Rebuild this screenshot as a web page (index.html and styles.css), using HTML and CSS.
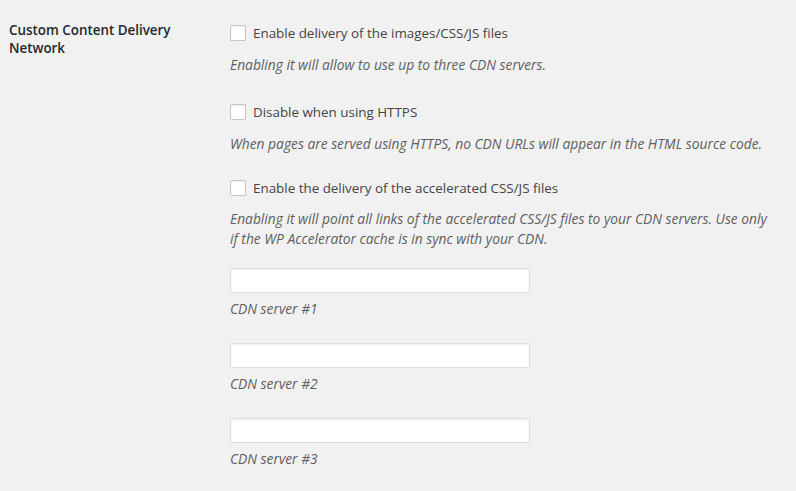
FILE: index.html
```html
<!DOCTYPE html>
<html lang="en">
<head>
<meta charset="utf-8">
<title>CDN settings</title>
<link rel="stylesheet" href="styles.css">
</head>
<body>
<div class="form-row">
  <div class="row-label">Custom Content Delivery Network</div>
  <div class="row-field">
    <div class="option">
      <label class="check"><input type="checkbox" class="cb"><span>Enable delivery of the images/CSS/JS files</span></label>
      <p class="description">Enabling it will allow to use up to three CDN servers.</p>
    </div>
    <div class="option">
      <label class="check"><input type="checkbox" class="cb"><span>Disable when using HTTPS</span></label>
      <p class="description">When pages are served using HTTPS, no CDN URLs will appear in the HTML source code.</p>
    </div>
    <div class="option">
      <label class="check"><input type="checkbox" class="cb"><span>Enable the delivery of the accelerated CSS/JS files</span></label>
      <p class="description">Enabling it will point all links of the accelerated CSS/JS files to your CDN servers. Use only if the WP Accelerator cache is in sync with your CDN.</p>
    </div>
    <div class="server">
      <input type="text" class="text-input">
      <p class="description">CDN server #1</p>
    </div>
    <div class="server">
      <input type="text" class="text-input">
      <p class="description">CDN server #2</p>
    </div>
    <div class="server">
      <input type="text" class="text-input">
      <p class="description">CDN server #3</p>
    </div>
  </div>
</div>
</body>
</html>
```
FILE: styles.css
```css
html, body {
  margin: 0;
  padding: 0;
  background: #f1f1f1;
}
body {
  font-family: "Open Sans", "Noto Sans", sans-serif;
  font-size: 13.4px;
  color: #444;
  padding: 0 0 0 9px;
}
.form-row {
  display: grid;
  grid-template-columns: 221px 1fr;
}
.row-label {
  padding-top: 21px;
  font-weight: 600;
  color: #23282d;
  line-height: 18px;
  width: 170px;
}
.row-field {
  padding-top: 23px;
  padding-right: 20px;
}
.option {
  margin-bottom: 27px;
}
.option:nth-child(2) {
  margin-bottom: 24px;
}
.option:nth-child(3) {
  margin-bottom: 19px;
}
.check {
  display: flex;
  align-items: center;
  gap: 7px;
  height: 20px;
  line-height: 20px;
}
.cb {
  appearance: none;
  -webkit-appearance: none;
  margin: 0;
  width: 16px;
  height: 16px;
  border: 1px solid #c4c8cc;
  border-radius: 1px;
  background: #fff;
  box-shadow: inset 0 1px 2px rgba(0, 0, 0, 0.08);
  box-sizing: border-box;
  flex: none;
}
.description {
  margin: 12px 0 0 0;
  font-size: 13.8px;
  font-style: italic;
  color: #5f5f5f;
  line-height: 20px;
}
.option:nth-child(3) .description {
  margin-top: 11px;
}
.server {
  margin-bottom: 24px;
}
.text-input {
  display: block;
  margin: 0;
  width: 300px;
  height: 25px;
  box-sizing: border-box;
  border: 1px solid #ddd;
  background: #fff;
  box-shadow: inset 0 1px 2px rgba(0, 0, 0, 0.07);
  padding: 3px 5px;
}
.server .description {
  margin-top: 6px;
}
```
